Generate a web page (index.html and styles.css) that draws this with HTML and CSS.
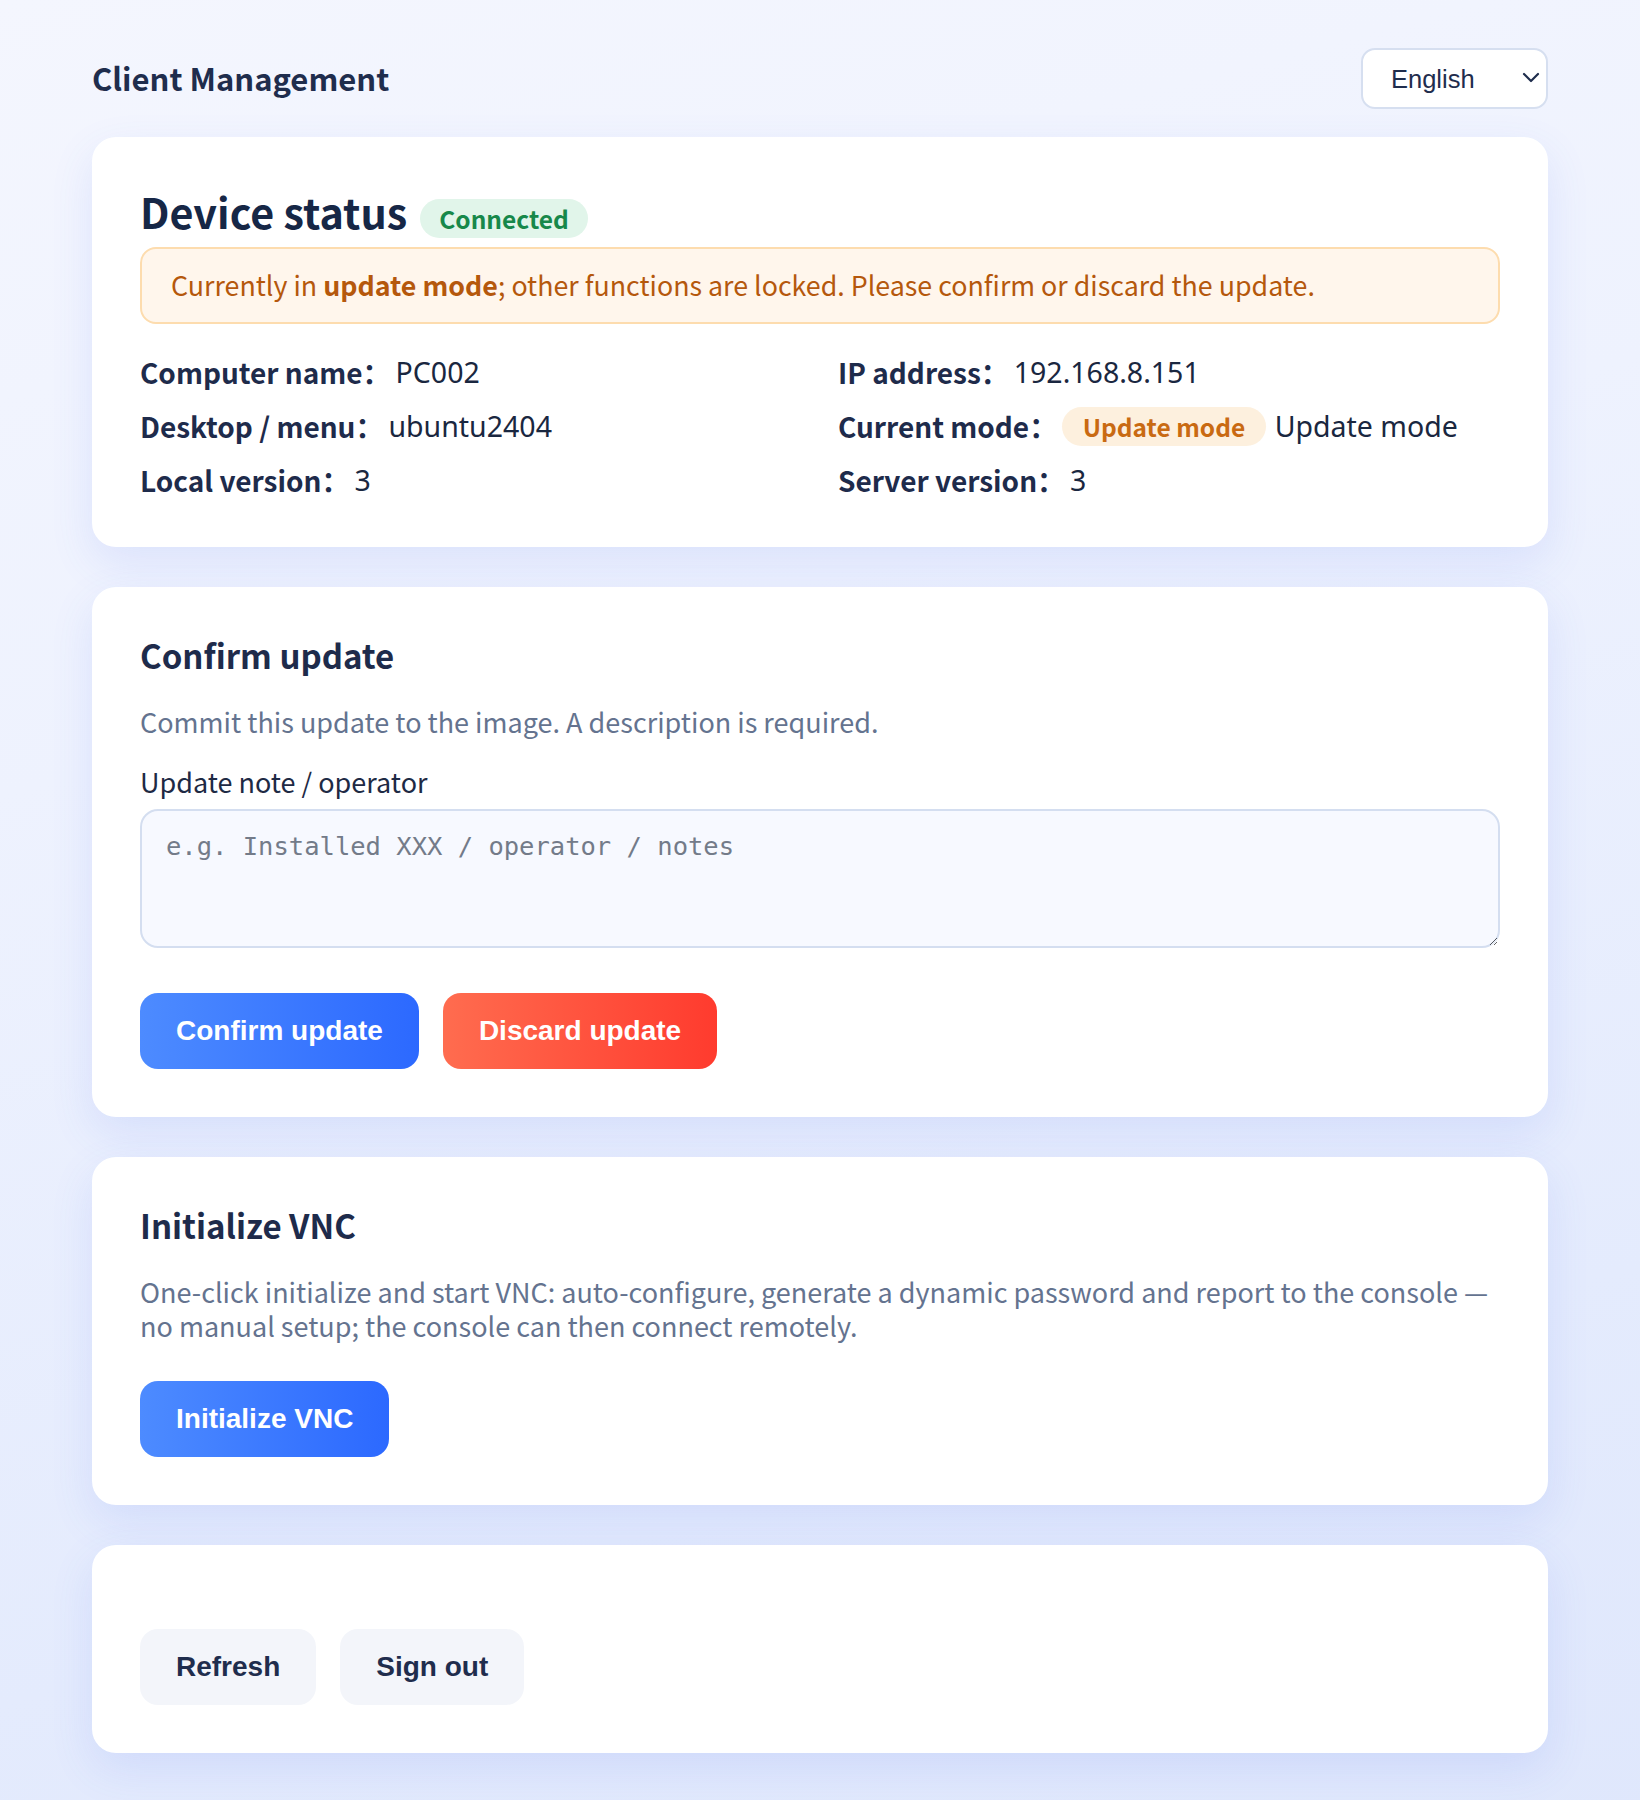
FILE: index.html
```html
<!DOCTYPE html>
<html lang="en">
<head>
<meta charset="utf-8">
<title>Client Management</title>
<link rel="stylesheet" href="styles.css">
</head>
<body>
<div class="page">
  <header class="topbar">
    <h1 class="app-title">Client Management</h1>
    <div class="lang">
      <select class="lang-select">
        <option>English</option>
      </select>
      <svg class="lang-chevron" width="18" height="11" viewBox="0 0 18 11"><path d="M2 2 L9 9 L16 2" fill="none" stroke="#1f2d4d" stroke-width="2.2" stroke-linecap="round" stroke-linejoin="round"/></svg>
    </div>
  </header>

  <section class="card">
    <div class="status-head">
      <h2 class="status-title">Device status</h2>
      <span class="badge badge-ok">Connected</span>
    </div>
    <div class="alert">Currently in <b>update mode</b>; other functions are locked. Please confirm or discard the update.</div>
    <div class="info-grid">
      <div class="info-row"><span class="info-label">Computer name：</span><span class="info-value">PC002</span></div>
      <div class="info-row"><span class="info-label">IP address：</span><span class="info-value">192.168.8.151</span></div>
      <div class="info-row"><span class="info-label">Desktop / menu：</span><span class="info-value">ubuntu2404</span></div>
      <div class="info-row"><span class="info-label">Current mode：</span><span class="badge badge-warn">Update mode</span><span class="info-value mode-text">Update mode</span></div>
      <div class="info-row"><span class="info-label">Local version：</span><span class="info-value">3</span></div>
      <div class="info-row"><span class="info-label">Server version：</span><span class="info-value">3</span></div>
    </div>
  </section>

  <section class="card">
    <h2 class="card-title">Confirm update</h2>
    <p class="card-desc desc-form">Commit this update to the image. A description is required.</p>
    <label class="field-label" for="note">Update note / operator</label>
    <textarea id="note" class="note" placeholder="e.g. Installed XXX / operator / notes"></textarea>
    <div class="actions">
      <button class="btn btn-primary">Confirm update</button>
      <button class="btn btn-danger">Discard update</button>
    </div>
  </section>

  <section class="card">
    <h2 class="card-title">Initialize VNC</h2>
    <p class="card-desc desc-vnc">One-click initialize and start VNC: auto-configure, generate a dynamic password and report to the console — no manual setup; the console can then connect remotely.</p>
    <div class="actions">
      <button class="btn btn-primary">Initialize VNC</button>
    </div>
  </section>

  <section class="card card-footer">
    <div class="actions">
      <button class="btn btn-ghost">Refresh</button>
      <button class="btn btn-ghost">Sign out</button>
    </div>
  </section>
</div>
</body>
</html>
```
FILE: styles.css
```css
* { box-sizing: border-box; }

html, body { margin: 0; padding: 0; }

body {
  min-height: 1800px;
  font-family: "Noto Sans CJK SC", "Noto Sans", sans-serif;
  font-size: 27px;
  color: #1e2a44;
  background: linear-gradient(165deg, #f4f6fe 0%, #eef2fe 35%, #e4ebfd 75%, #dfe7fc 100%);
}

.page {
  max-width: 1456px;
  margin: 0 auto;
  padding: 48px 0 40px;
}

.topbar {
  display: flex;
  align-items: center;
  justify-content: space-between;
  margin-bottom: 28px;
}

.app-title {
  margin: 0 0 2px;
  font-size: 31px;
  font-weight: 700;
  color: #1f2d4d;
  line-height: 38px;
}

.lang { position: relative; }

.lang-select {
  appearance: none;
  -webkit-appearance: none;
  width: 187px;
  height: 61px;
  padding: 0 40px 0 28px;
  border: 2px solid #d6dff0;
  border-radius: 14px;
  background: #ffffff;
  font-family: "Liberation Sans", Arial, sans-serif;
  font-size: 25.5px;
  color: #1f2d4d;
}

.lang-chevron {
  position: absolute;
  right: 8px;
  top: 24px;
  pointer-events: none;
}

.card {
  background: #ffffff;
  border-radius: 24px;
  padding: 48px;
  margin-bottom: 40px;
  box-shadow: 0 16px 44px rgba(70, 110, 235, 0.12);
}

.status-head {
  display: flex;
  align-items: baseline;
  gap: 13px;
  margin-bottom: 9px;
}

.status-title {
  margin: 0;
  font-size: 41.3px;
  line-height: 52px;
  font-weight: 700;
  color: #162746;
}

.badge {
  display: inline-block;
  border-radius: 999px;
  font-weight: 700;
  font-size: 24.5px;
  line-height: 31px;
  padding: 4px 19px;
  white-space: nowrap;
}

.badge-ok {
  background: #e1f5ea;
  color: #17884a;
}

.badge-warn {
  background: #fdf0de;
  color: #c96a12;
  padding: 4px 20.5px;
}

.alert {
  border: 2px solid #fddcae;
  background: #fff6ec;
  border-radius: 16px;
  padding: 18px 29px;
  color: #b5580c;
  font-size: 26.8px;
  line-height: 36.9px;
}

.alert b { font-weight: 700; }

.info-grid {
  display: grid;
  grid-template-columns: 1fr 1fr;
  column-gap: 36px;
  row-gap: 16px;
  margin-top: 30px;
}

.info-row {
  display: flex;
  align-items: center;
  line-height: 36.9px;
}

.info-label {
  font-size: 28px;
  font-weight: 700;
  color: #1e2b4b;
  margin-right: 5px;
}

.info-value {
  font-family: "Noto Sans", "Noto Sans CJK SC", sans-serif;
  font-size: 28.5px;
  color: #1a2740;
}

.mode-text { margin-left: 9px; }

.card-title {
  margin: 0 0 30px;
  font-size: 33px;
  line-height: 40px;
  font-weight: 700;
  color: #1e2b4b;
}

.card-desc {
  margin: 0;
  color: #64738f;
  line-height: 34.4px;
}

.desc-form { margin-bottom: 26px; }
.desc-vnc { margin-bottom: 38px; }

.field-label {
  display: block;
  line-height: 34.4px;
  color: #1e2a44;
  margin-bottom: 9px;
}

.note {
  display: block;
  width: 100%;
  height: 139px;
  padding: 20px 24px;
  border: 2px solid #d4def0;
  border-radius: 18px;
  background: #f7f9ff;
  font-family: "DejaVu Sans Mono", monospace;
  font-size: 25.5px;
  color: #1e2a44;
  resize: vertical;
  margin-bottom: 45px;
}

.note::placeholder { color: #737b89; }

.actions {
  display: flex;
  gap: 24px;
}

.btn {
  border: none;
  border-radius: 18px;
  padding: 22px 36px;
  font-family: "Liberation Sans", Arial, sans-serif;
  font-size: 28px;
  font-weight: 700;
  line-height: 32px;
  cursor: pointer;
}

.btn-primary {
  color: #ffffff;
  background: linear-gradient(90deg, #4d8bff 0%, #2c69ff 100%);
}

.btn-danger {
  color: #ffffff;
  background: linear-gradient(90deg, #ff6c4f 0%, #ff3b2e 100%);
}

.btn-ghost {
  color: #1f2d4d;
  background: #f3f5fa;
}

.card-footer { padding-top: 84px; }
```
